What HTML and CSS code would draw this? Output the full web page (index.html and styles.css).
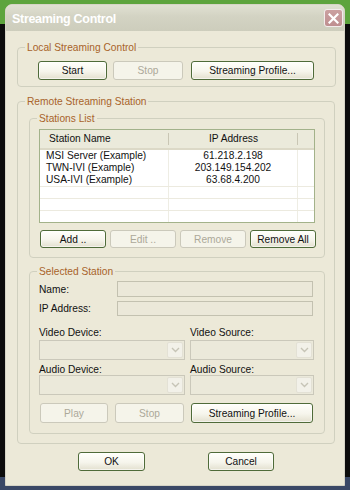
FILE: index.html
```html
<!DOCTYPE html>
<html>
<head>
<meta charset="utf-8">
<title>Streaming Control</title>
<link rel="stylesheet" href="styles.css">
</head>
<body>
<div class="window">
  <div class="titlebar">
    <span class="title">Streaming Control</span>
    <span class="close"><svg width="11" height="11" viewBox="0 0 11 11"><path d="M1.5 1.5 L9.5 9.5 M9.5 1.5 L1.5 9.5" stroke="#fff" stroke-width="2.2" stroke-linecap="square" fill="none"/></svg></span>
  </div>
  <div class="client">
    <fieldset class="group local">
      <legend>Local Streaming Control</legend>
      <div class="local-row">
        <button class="btn b-start">Start</button>
        <button class="btn b-stop" disabled>Stop</button>
        <button class="btn b-profile">Streaming Profile...</button>
      </div>
    </fieldset>

    <fieldset class="group remote">
      <legend>Remote Streaming Station</legend>

      <fieldset class="group stations">
        <legend>Stations List</legend>
        <div class="list">
          <div class="list-head">
            <div class="hcell c1">Station Name</div>
            <div class="hcell c2">IP Address</div>
            <div class="hcell c3"></div>
          </div>
          <div class="row">
            <div class="cell c1">MSI Server (Example)</div>
            <div class="cell c2">61.218.2.198</div>
            <div class="cell c3"></div>
          </div>
          <div class="row">
            <div class="cell c1">TWN-IVI (Example)</div>
            <div class="cell c2">203.149.154.202</div>
            <div class="cell c3"></div>
          </div>
          <div class="row">
            <div class="cell c1">USA-IVI (Example)</div>
            <div class="cell c2">63.68.4.200</div>
            <div class="cell c3"></div>
          </div>
          <div class="row empty">
            <div class="cell c1"></div>
            <div class="cell c2"></div>
            <div class="cell c3"></div>
          </div>
          <div class="row empty">
            <div class="cell c1"></div>
            <div class="cell c2"></div>
            <div class="cell c3"></div>
          </div>
          <div class="row empty">
            <div class="cell c1"></div>
            <div class="cell c2"></div>
            <div class="cell c3"></div>
          </div>
        </div>
        <div class="list-buttons">
          <button class="btn">Add ..</button>
          <button class="btn" disabled>Edit ..</button>
          <button class="btn" disabled>Remove</button>
          <button class="btn">Remove All</button>
        </div>
      </fieldset>

      <fieldset class="group selected">
        <legend>Selected Station</legend>
        <div class="field">
          <span class="flabel">Name:</span>
          <span class="edit"></span>
        </div>
        <div class="field ip">
          <span class="flabel">IP Address:</span>
          <span class="edit"></span>
        </div>
        <div class="devices">
          <span class="dlabel">Video Device:</span>
          <span class="dlabel">Video Source:</span>
          <span class="combo"><span class="drop"><svg width="9" height="6" viewBox="0 0 9 6"><path d="M1 1 L4.5 4.5 L8 1" stroke="#c6c4b6" stroke-width="1.4" fill="none"/></svg></span></span>
          <span class="combo"><span class="drop"><svg width="9" height="6" viewBox="0 0 9 6"><path d="M1 1 L4.5 4.5 L8 1" stroke="#c6c4b6" stroke-width="1.4" fill="none"/></svg></span></span>
          <span class="dlabel second">Audio Device:</span>
          <span class="dlabel second">Audio Source:</span>
          <span class="combo"><span class="drop"><svg width="9" height="6" viewBox="0 0 9 6"><path d="M1 1 L4.5 4.5 L8 1" stroke="#c6c4b6" stroke-width="1.4" fill="none"/></svg></span></span>
          <span class="combo"><span class="drop"><svg width="9" height="6" viewBox="0 0 9 6"><path d="M1 1 L4.5 4.5 L8 1" stroke="#c6c4b6" stroke-width="1.4" fill="none"/></svg></span></span>
        </div>
        <div class="play-row">
          <button class="btn b-play" disabled>Play</button>
          <button class="btn b-pstop" disabled>Stop</button>
          <button class="btn b-pprofile">Streaming Profile...</button>
        </div>
      </fieldset>
    </fieldset>

    <div class="dialog-buttons">
      <button class="btn b-ok">OK</button>
      <button class="btn b-cancel">Cancel</button>
    </div>
  </div>
</div>
</body>
</html>
```

FILE: styles.css
```css
* { box-sizing: border-box; }

html, body {
  margin: 0;
  padding: 0;
}

body {
  width: 350px;
  height: 490px;
  overflow: hidden;
  background: linear-gradient(#5da43d 0, #5da43d 24px, #0c0c0c 24px, #0c0c0c 477px, #3a4866 477px);
  font-family: "Liberation Sans", Arial, sans-serif;
  font-size: 10.2px;
  color: #111;
}

.window {
  margin: 4px 0 0 5px;
  width: 340px;
  height: 482px;
  background: #ece9d8;
  border: 1px solid #d6d4c6;
  border-radius: 7px 7px 0 0;
  display: flex;
  flex-direction: column;
  overflow: hidden;
}

.titlebar {
  height: 26px;
  flex: none;
  display: flex;
  align-items: center;
  justify-content: space-between;
  padding: 0 1px 0 6px;
  background: linear-gradient(#e0e0d2, #d3d3c3 45%, #cdcdbc);
}

.title {
  color: #fff;
  font-weight: bold;
  font-size: 12.5px;
  letter-spacing: -0.3px;
  padding-top: 1px;
}

.close {
  width: 19px;
  height: 18px;
  border: 1px solid #f3ecec;
  border-radius: 3px;
  background: linear-gradient(#cba0a0, #bf8f90);
  display: flex;
  align-items: center;
  justify-content: center;
}

.client {
  flex: 1;
  display: flex;
  flex-direction: column;
  padding: 10px 9px 0 11px;
}

.group {
  margin: 0;
  padding: 0;
  min-width: 0;
  border: 1px solid #d0d0bf;
  border-radius: 4px;
}

.group > legend {
  color: #a8632a;
  line-height: 13px;
  padding: 0 2px;
}

/* Local streaming control */
.local {
  margin-right: -1px;
  padding: 7px 0 6px 20px;
}

.local > legend { margin-left: -13px; }

.local-row {
  display: flex;
  height: 19px;
}

.btn {
  height: 100%;
  margin: 0;
  padding: 0;
  font: inherit;
  color: #111;
  border: 1px solid #4f6b39;
  border-radius: 3px;
  background: linear-gradient(#fffffb, #f6f5ec 55%, #e3e0cf);
  display: flex;
  align-items: center;
  justify-content: center;
  box-shadow: inset 0 0 0 1px rgba(255,255,255,0.6);
}

.btn:disabled {
  color: #aca899;
  border-color: #cbc9bb;
  background: #f5f4ea;
  box-shadow: none;
}

.b-start { width: 69px; }
.b-stop { width: 70px; margin-left: 6px; }
.b-profile { width: 123px; margin-left: 8px; }

/* Remote streaming station */
.remote {
  margin-top: 8px;
  padding: 4px 9px 9px 11px;
}

.remote > legend { margin-left: -4px; }

.stations {
  padding: 4px 9px 9px 9px;
}

.stations > legend { margin-left: -2px; }

.list {
  height: 94px;
  border: 1px solid #a3b28a;
  background: #fff;
  display: flex;
  flex-direction: column;
}

.list-head {
  display: flex;
  height: 20px;
  flex: none;
  background: #ebeadb;
  border-bottom: 2px solid #dcd9c7;
}

.hcell {
  line-height: 18px;
  background-image: linear-gradient(#c9c6b4, #c9c6b4);
  background-repeat: no-repeat;
  background-position: right 3px;
  background-size: 1px 12px;
}

.hcell.c1 { padding-left: 9px; }
.hcell.c2 { text-align: center; }
.hcell.c3 { background-image: none; }

.c1 { width: 129px; flex: none; }
.c2 { width: 129px; flex: none; }
.c3 { flex: 1; }

.row {
  display: flex;
  height: 12px;
  flex: none;
}

.row.empty {
  border-top: 1px solid #eceadf;
}

.cell {
  line-height: 12px;
  white-space: nowrap;
  overflow: hidden;
}

.cell.c1, .cell.c2 {
  border-right: 1px solid #eeede4;
}

.cell.c1 { padding-left: 6px; }
.cell.c2 { text-align: center; }

.list-buttons {
  display: grid;
  grid-template-columns: repeat(4, 66px);
  column-gap: 4px;
  height: 18px;
  margin: 7px 0 0 1px;
}

/* Selected station */
.selected {
  margin-top: 7px;
  padding: 3px 11px 10px 9px;
}

.selected > legend { margin-left: -2px; }

.field {
  display: flex;
  align-items: center;
  height: 16px;
}

.field.ip {
  margin-top: 4px;
  height: 15px;
}

.flabel {
  width: 78px;
  flex: none;
}

.edit {
  width: 196px;
  height: 100%;
  border: 1px solid #c3c1b0;
  background: #ebe8d9;
}

.devices {
  display: grid;
  grid-template-columns: 146px 124px;
  column-gap: 5px;
  grid-template-rows: 13px 20px 13px 20px;
  row-gap: 1px;
  margin-top: 10px;
}

.dlabel {
  line-height: 13px;
}

.combo {
  border: 1px solid #cac8ba;
  background: #ebe9da;
  display: flex;
  justify-content: flex-end;
  padding: 1px;
}

.drop {
  width: 16px;
  height: 100%;
  border: 1px solid #e3e1d5;
  border-radius: 2px;
  background: #f2f1e9;
  display: flex;
  align-items: center;
  justify-content: center;
}

.devices .dlabel.second { margin-top: 2px; }

.play-row {
  display: flex;
  height: 20px;
  margin: 8px 0 0 1px;
}

.b-play { width: 68px; }
.b-pstop { width: 69px; margin-left: 7px; }
.b-pprofile { width: 122px; margin-left: 7px; }

/* Dialog buttons */
.dialog-buttons {
  display: flex;
  height: 19px;
  margin-top: 8px;
}

.b-ok { width: 67px; margin-left: 61px; }
.b-cancel { width: 66px; margin-left: 63px; }
```
